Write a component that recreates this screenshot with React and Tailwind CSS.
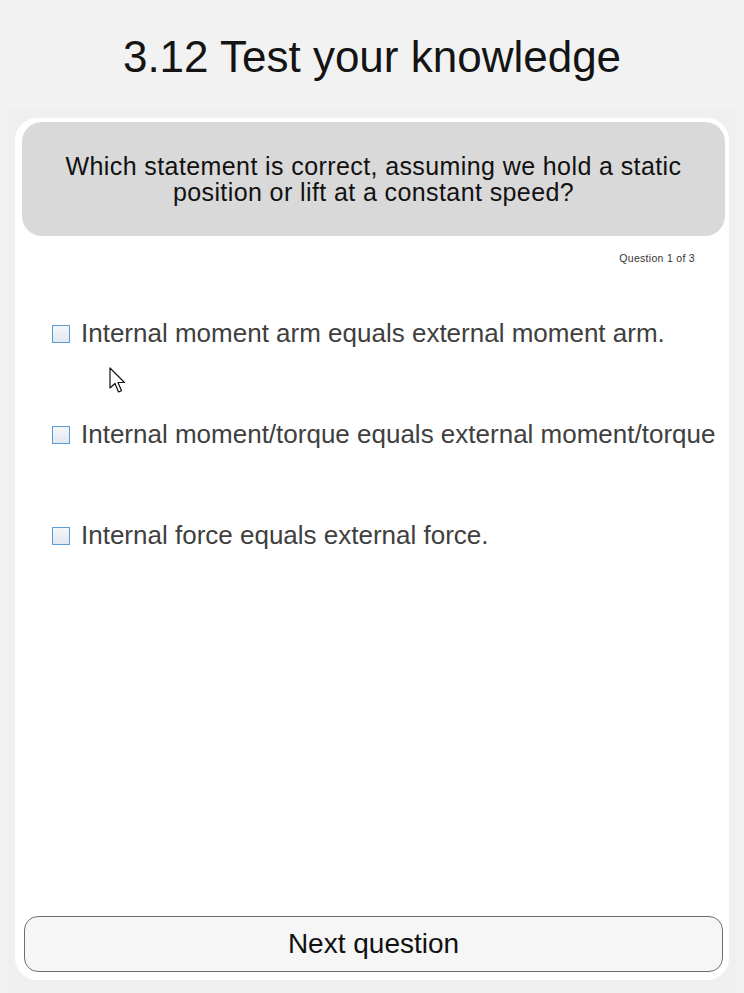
import { useState } from 'react'

const OPTIONS = [
  'Internal moment arm equals external moment arm.',
  'Internal moment/torque equals external moment/torque',
  'Internal force equals external force.',
]

function Checkbox({ checked, onChange }) {
  return (
    <button
      onClick={onChange}
      className="w-[18px] h-[18px] shrink-0 border border-[#5b9bd8] bg-gradient-to-b from-[#f4f6f9] to-[#e3e8ef] flex items-center justify-center"
    >
      {checked && <span className="w-[8px] h-[8px] bg-[#3b7bc8]" />}
    </button>
  )
}

export default function App() {
  const [picked, setPicked] = useState(null)

  return (
    <div className="relative w-[744px] h-[993px] overflow-hidden bg-[#f2f2f2] flex flex-col font-['Liberation_Sans',Arial,sans-serif]">
      {/* Title */}
      <div className="h-[110px] shrink-0 flex items-center justify-center">
        <h1 className="text-[44px] leading-none text-[#141414] pt-[4px]">3.12 Test your knowledge</h1>
      </div>

      {/* Panel */}
      <div className="flex-1 bg-[#efefef] mx-[7px] pt-[8px] pb-[13px] px-[8px] flex">
        <div className="flex-1 bg-white rounded-[22px] pt-[4px] pl-[7px] pr-[4px] pb-[8px] flex flex-col">
          <div className="h-[114px] bg-[#d9d9d9] rounded-[20px] flex items-center justify-center">
            <p className="text-[25px] leading-[26px] tracking-[0.4px] text-[#111] text-center">
              Which statement is correct, assuming we hold a static
              <br />
              position or lift at a constant speed?
            </p>
          </div>

          <div className="flex justify-end pr-[30px] mt-[15px]">
            <span className="text-[10.5px] text-[#333] tracking-[0.3px]">Question 1 of 3</span>
          </div>

          {/* Options */}
          <div className="flex flex-col gap-[77px] mt-[55px] pl-[30px]">
            {OPTIONS.map((opt, i) => (
              <label key={i} className="flex items-center gap-[11px] h-[24px] cursor-pointer">
                <Checkbox checked={picked === i} onChange={() => setPicked(i)} />
                <span className="text-[26px] text-[#404040] whitespace-nowrap">{opt}</span>
              </label>
            ))}
          </div>

          <div className="flex-1" />

          <button className="mx-[2px] h-[56px] rounded-[14px] border border-[#6e6e6e] bg-[#f6f6f6] text-[28px] text-[#111]">
            Next question
          </button>
        </div>
      </div>

      {/* Mouse pointer */}
      <svg className="absolute left-[109px] top-[367px]" width="18" height="28" viewBox="0 0 18 28">
        <path
          d="M1 1 L1 21 L6 16.5 L9.5 25 L12.5 23.8 L9 15.5 L15.5 15.5 Z"
          fill="white"
          stroke="#111"
          strokeWidth="1.2"
          strokeLinejoin="round"
        />
      </svg>
    </div>
  )
}
